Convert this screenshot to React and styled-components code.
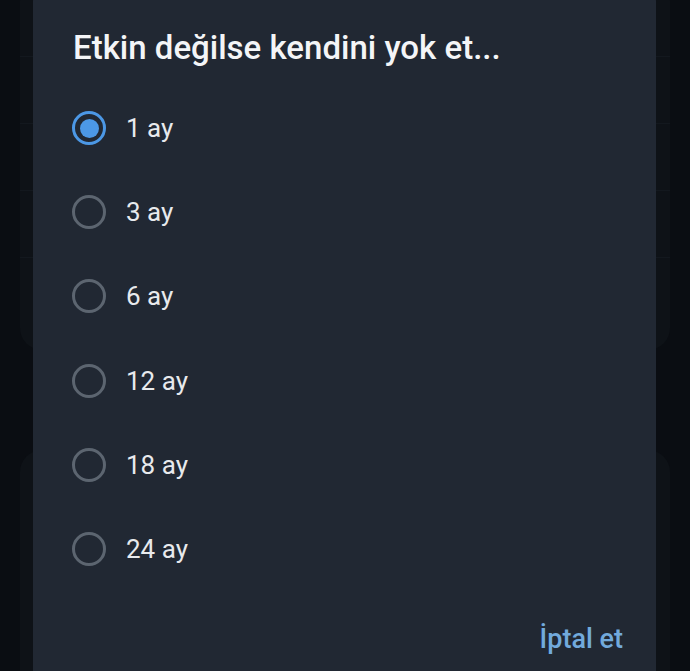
import React, { useState } from 'react';
import styled, { createGlobalStyle } from 'styled-components';

const GlobalStyle = createGlobalStyle`
  html, body {
    margin: 0;
    padding: 0;
    background: #0a0d12;
    font-family: Roboto, 'Noto Sans', sans-serif;
  }
`;

const options = ['1 ay', '3 ay', '6 ay', '12 ay', '18 ay', '24 ay'];

const App = () => {
  const [selected, setSelected] = useState(0);
  return (
    <Screen>
      <GlobalStyle />
      <Backdrop>
        <BackCard $height={360}>
          <BackRow />
          <BackRow />
          <BackRow />
          <BackRow />
        </BackCard>
        <BackCard $height={400} />
      </Backdrop>
      <Dialog>
        <Title>Etkin değilse kendini yok et...</Title>
        <OptionList>
          {options.map((label, i) => (
            <Option key={label} onClick={() => setSelected(i)}>
              <Radio $checked={selected === i} />
              <OptionLabel>{label}</OptionLabel>
            </Option>
          ))}
        </OptionList>
        <Actions>
          <TextButton>İptal et</TextButton>
        </Actions>
      </Dialog>
    </Screen>
  );
};

export default App;

const Screen = styled.div`
  position: relative;
  width: 690px;
  height: 671px;
  overflow: hidden;
  background: #0a0d12;
`;

const Backdrop = styled.div`
  display: flex;
  flex-direction: column;
  gap: 100px;
  padding: 0 20px;
  margin-top: -20px;
`;

const BackCard = styled.div`
  height: ${(p) => p.$height}px;
  border-radius: 22px;
  background: #0e1217;
  display: flex;
  flex-direction: column;
  padding-top: 10px;
`;

const BackRow = styled.div`
  height: 66px;
  border-bottom: 1px solid #13181e;
`;

const Dialog = styled.div`
  position: absolute;
  left: 33px;
  top: -24px;
  width: 623px;
  height: 740px;
  border-radius: 26px;
  background: #212833;
  box-sizing: border-box;
  padding: 52px 33px 0 39px;
  display: flex;
  flex-direction: column;
`;

const Title = styled.h2`
  margin: 0 0 0 1px;
  font-size: 33px;
  line-height: 40px;
  font-weight: 500;
  color: #f4f5f7;
  letter-spacing: 0;
`;

const OptionList = styled.div`
  display: flex;
  flex-direction: column;
  margin-top: 18px;
`;

const Option = styled.div`
  height: 84.2px;
  display: flex;
  align-items: center;
  gap: 20px;
  cursor: pointer;
`;

const Radio = styled.span`
  width: 34px;
  height: 34px;
  box-sizing: border-box;
  border-radius: 50%;
  border: 3.5px solid ${(p) => (p.$checked ? '#4c98e6' : '#5c6570')};
  display: flex;
  align-items: center;
  justify-content: center;
  &::after {
    content: '';
    width: 19px;
    height: 19px;
    border-radius: 50%;
    background: #4c98e6;
    display: ${(p) => (p.$checked ? 'block' : 'none')};
  }
`;

const OptionLabel = styled.span`
  font-size: 26px;
  color: #e8eaed;
`;

const Actions = styled.div`
  display: flex;
  justify-content: flex-end;
  margin-top: 32px;
`;

const TextButton = styled.button`
  background: none;
  border: none;
  padding: 0;
  font-family: Roboto, 'Noto Sans', sans-serif;
  font-size: 27px;
  font-weight: 500;
  color: #72aadc;
  cursor: pointer;
`;
